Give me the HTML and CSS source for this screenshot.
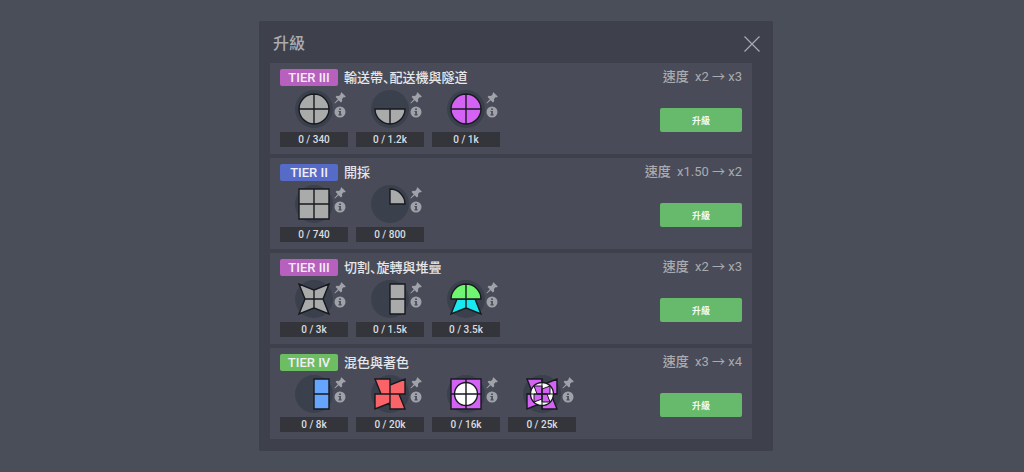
FILE: index.html
```
<!DOCTYPE html>
<html lang="zh-Hant">
  <head>
    <meta charset="UTF-8" />
    <meta name="viewport" content="width=device-width, initial-scale=1.0" />
    <title>升級</title>
    <link rel="stylesheet" href="styles.css" />
  </head>
  <body>
    <!-- Shared icons -->
    <svg class="sprite" aria-hidden="true">
      <symbol id="pin" viewBox="0 0 12 12">
        <path d="M7.4 0.2 L11.8 4.6 L10.7 5.4 L9.9 5.1 L8 7 L8.2 9.3 L6.9 10.4 L4.7 8.2 L0.9 11.6 L0.4 11.1 L3.8 7.3 L1.6 5.1 L2.7 3.8 L5 4 L6.9 2.1 L6.6 1.3 Z" />
      </symbol>
      <symbol id="info" viewBox="0 0 12 12">
        <circle cx="6" cy="6" r="5.5" />
        <path class="hole" d="M5.1 2.4h1.8v1.6H5.1zM4.5 4.9h2.4v3.4h.7v1.2H4.5V8.3h.7V6.1h-.7z" />
      </symbol>
      <symbol id="circle" viewBox="0 0 38 38">
        <path d="M19 19V4A15 15 0 0 1 34 19ZM19 19H34A15 15 0 0 1 19 34ZM19 19V34A15 15 0 0 1 4 19ZM19 19H4A15 15 0 0 1 19 4Z" />
      </symbol>
      <symbol id="square" viewBox="0 0 38 38">
        <path d="M4 4H19V19H4ZM19 4H34V19H19ZM19 19H34V34H19ZM4 19H19V34H4Z" />
      </symbol>
      <symbol id="half-square" viewBox="0 0 38 38">
        <path d="M19 4H34V19H19ZM19 19H34V34H19Z" />
      </symbol>
      <symbol id="windmill" viewBox="0 0 38 38">
        <path d="M19 19V4H4L10 19ZM19 19H34V4L19 10ZM19 19V34H34L28 19ZM19 19H4V34L19 28Z" />
      </symbol>
    </svg>

    <main class="panel">
      <header class="panel-header">
        <h1>升級</h1>
        <button type="button" class="close" aria-label="關閉">
          <svg viewBox="0 0 16 16"><path d="M0.5 0.5 L15.5 15.5 M15.5 0.5 L0.5 15.5" /></svg>
        </button>
      </header>

      <section class="card">
        <div class="info">
          <div class="card-title">
            <span class="tier tier-3">TIER III</span>
            <h2>輸送帶、配送機與隧道</h2>
          </div>
          <ul class="costs">
            <li>
              <div class="cost">
                <svg class="shape gray"><use href="#circle" /></svg>
                <div class="tools">
                  <svg><use href="#pin" /></svg>
                  <svg><use href="#info" /></svg>
                </div>
              </div>
              <span class="amount">0 / 340</span>
            </li>
            <li>
              <div class="cost">
                <svg class="shape gray" viewBox="0 0 38 38"><path d="M19 19H34A15 15 0 0 1 19 34ZM19 19V34A15 15 0 0 1 4 19Z" /></svg>
                <div class="tools">
                  <svg><use href="#pin" /></svg>
                  <svg><use href="#info" /></svg>
                </div>
              </div>
              <span class="amount">0 / 1.2k</span>
            </li>
            <li>
              <div class="cost">
                <svg class="shape purple"><use href="#circle" /></svg>
                <div class="tools">
                  <svg><use href="#pin" /></svg>
                  <svg><use href="#info" /></svg>
                </div>
              </div>
              <span class="amount">0 / 1k</span>
            </li>
          </ul>
        </div>
        <div class="action">
          <p class="speed"><span>速度</span> x2 → x3</p>
          <button type="button" class="upgrade">升級</button>
        </div>
      </section>

      <section class="card">
        <div class="info">
          <div class="card-title">
            <span class="tier tier-2">TIER II</span>
            <h2>開採</h2>
          </div>
          <ul class="costs">
            <li>
              <div class="cost">
                <svg class="shape gray"><use href="#square" /></svg>
                <div class="tools">
                  <svg><use href="#pin" /></svg>
                  <svg><use href="#info" /></svg>
                </div>
              </div>
              <span class="amount">0 / 740</span>
            </li>
            <li>
              <div class="cost">
                <svg class="shape gray" viewBox="0 0 38 38"><path d="M19 19V4A15 15 0 0 1 34 19Z" /></svg>
                <div class="tools">
                  <svg><use href="#pin" /></svg>
                  <svg><use href="#info" /></svg>
                </div>
              </div>
              <span class="amount">0 / 800</span>
            </li>
          </ul>
        </div>
        <div class="action">
          <p class="speed"><span>速度</span> x1.50 → x2</p>
          <button type="button" class="upgrade">升級</button>
        </div>
      </section>

      <section class="card">
        <div class="info">
          <div class="card-title">
            <span class="tier tier-3">TIER III</span>
            <h2>切割、旋轉與堆疊</h2>
          </div>
          <ul class="costs">
            <li>
              <div class="cost">
                <svg class="shape gray" viewBox="0 0 38 38"><path d="M19 19V10L4 4L10 19ZM19 19H28L34 4L19 10ZM19 19V28L34 34L28 19ZM19 19H10L4 34L19 28Z" /></svg>
                <div class="tools">
                  <svg><use href="#pin" /></svg>
                  <svg><use href="#info" /></svg>
                </div>
              </div>
              <span class="amount">0 / 3k</span>
            </li>
            <li>
              <div class="cost">
                <svg class="shape gray"><use href="#half-square" /></svg>
                <div class="tools">
                  <svg><use href="#pin" /></svg>
                  <svg><use href="#info" /></svg>
                </div>
              </div>
              <span class="amount">0 / 1.5k</span>
            </li>
            <li>
              <div class="cost">
                <svg class="shape" viewBox="0 0 38 38">
                  <path class="cyan" d="M19 19V28L34 34L28 19ZM19 19H10L4 34L19 28Z" />
                  <path class="green" d="M19 19V4A15 15 0 0 1 34 19ZM19 19H4A15 15 0 0 1 19 4Z" />
                </svg>
                <div class="tools">
                  <svg><use href="#pin" /></svg>
                  <svg><use href="#info" /></svg>
                </div>
              </div>
              <span class="amount">0 / 3.5k</span>
            </li>
          </ul>
        </div>
        <div class="action">
          <p class="speed"><span>速度</span> x2 → x3</p>
          <button type="button" class="upgrade">升級</button>
        </div>
      </section>

      <section class="card">
        <div class="info">
          <div class="card-title">
            <span class="tier tier-4">TIER IV</span>
            <h2>混色與著色</h2>
          </div>
          <ul class="costs">
            <li>
              <div class="cost">
                <svg class="shape blue"><use href="#half-square" /></svg>
                <div class="tools">
                  <svg><use href="#pin" /></svg>
                  <svg><use href="#info" /></svg>
                </div>
              </div>
              <span class="amount">0 / 8k</span>
            </li>
            <li>
              <div class="cost">
                <svg class="shape red"><use href="#windmill" /></svg>
                <div class="tools">
                  <svg><use href="#pin" /></svg>
                  <svg><use href="#info" /></svg>
                </div>
              </div>
              <span class="amount">0 / 20k</span>
            </li>
            <li>
              <div class="cost">
                <svg class="shape" viewBox="0 0 38 38">
                  <path class="purple" d="M4 4H34V34H4Z" />
                  <circle class="white" cx="19" cy="19" r="11.5" />
                  <path d="M19 4V34M4 19H34" />
                </svg>
                <div class="tools">
                  <svg><use href="#pin" /></svg>
                  <svg><use href="#info" /></svg>
                </div>
              </div>
              <span class="amount">0 / 16k</span>
            </li>
            <li>
              <div class="cost">
                <svg class="shape" viewBox="0 0 38 38">
                  <path class="purple" d="M19 19V4H4L10 19ZM19 19H34V4L19 10ZM19 19V34H34L28 19ZM19 19H4V34L19 28Z" />
                  <circle class="white" cx="19" cy="19" r="11.5" />
                  <path class="purple thin" d="M19 19V11H11L14 19ZM19 19H27V11L19 14ZM19 19V27H27L24 19ZM19 19H11V27L19 24Z" />
                  <path class="thin" d="M19 4V34M4 19H34" />
                </svg>
                <div class="tools">
                  <svg><use href="#pin" /></svg>
                  <svg><use href="#info" /></svg>
                </div>
              </div>
              <span class="amount">0 / 25k</span>
            </li>
          </ul>
        </div>
        <div class="action">
          <p class="speed"><span>速度</span> x3 → x4</p>
          <button type="button" class="upgrade">升級</button>
        </div>
      </section>
    </main>
  </body>
</html>
```
FILE: styles.css
```
* {
  box-sizing: border-box;
}

body {
  margin: 0;
  padding: 21px 0 21px 8px;
  background-color: #4a4e58;
  color: #a9abb0;
  font-family: Roboto, "Noto Sans CJK JP", sans-serif;
}

h1,
h2,
p,
ul {
  margin: 0;
  padding: 0;
}

button {
  border: none;
  padding: 0;
  font-family: inherit;
  cursor: pointer;
}

.sprite {
  display: none;
}

.panel {
  max-width: 514px;
  margin: 0 auto;
  padding: 0 21px 12px 11px;
  background-color: #3e404b;
  display: flex;
  flex-direction: column;
  gap: 4px;
}

.panel-header {
  height: 38px;
  padding-top: 8px;
  padding-left: 3px;
  margin-right: -8px;
  display: flex;
  align-items: center;
  justify-content: space-between;
}

h1 {
  font-size: 16px;
  line-height: 24px;
  font-weight: 500;
}

.close {
  width: 16px;
  height: 16px;
  background: none;
}

.close svg {
  display: block;
  width: 16px;
  height: 16px;
  stroke: #a9abb0;
  stroke-width: 1.2;
}

/* Upgrade cards */
.card {
  padding: 6px 10px 7px;
  background-color: #494c58;
  display: flex;
  justify-content: space-between;
}

.info {
  display: flex;
  flex-direction: column;
  gap: 4px;
}

.card-title {
  display: flex;
  align-items: center;
  gap: 6px;
  height: 17px;
}

.tier {
  width: 58px;
  border-radius: 2px;
  color: #f1eef5;
  font-size: 13px;
  line-height: 17px;
  font-weight: 500;
  text-align: center;
}

.tier-2 {
  background-color: #566bc8;
}

.tier-3 {
  background-color: #b860bd;
}

.tier-4 {
  background-color: #6dbd63;
}

/* half-width comma, set at the lower left */
h2 {
  color: #e6e7ea;
  font-family: Roboto, "Noto Sans CJK JP", sans-serif;
  font-size: 13px;
  line-height: 17px;
  font-weight: 500;
  font-feature-settings: "halt", "locl" 0;
}

.costs {
  display: flex;
  gap: 8px;
  list-style: none;
}

.costs li {
  width: 68px;
  display: flex;
  flex-direction: column;
  gap: 4px;
}

.cost {
  display: flex;
  gap: 1px;
  padding-left: 15px;
}

.shape {
  width: 38px;
  height: 38px;
  border-radius: 50%;
  background-color: #3a404c;
  stroke: #17191f;
  stroke-width: 1.4;
  overflow: visible;
}

.thin {
  stroke-width: 1;
}

.tools {
  display: flex;
  flex-direction: column;
  gap: 2px;
  padding-top: 2px;
}

.tools svg {
  width: 12px;
  height: 12px;
  fill: #a0a2aa;
}

.hole {
  fill: #494c58;
}

.gray {
  fill: #a9abaa;
}

.purple {
  fill: #d462f5;
}

.green {
  fill: #70f570;
}

.cyan {
  fill: #18e8f0;
}

.blue {
  fill: #65a5fb;
}

.red {
  fill: #fa6468;
}

.white {
  fill: #ffffff;
}

.amount {
  background-color: #33353b;
  color: #dcdde0;
  font-size: 10px;
  line-height: 15px;
  font-weight: 500;
  text-align: center;
}

.action {
  display: flex;
  flex-direction: column;
  align-items: flex-end;
  gap: 24px;
}

.speed {
  font-size: 13px;
  line-height: 15px;
}

.speed span {
  margin-right: 3px;
  font-weight: 500;
}

.upgrade {
  width: 82px;
  height: 24px;
  border-radius: 2px;
  background-color: #67ba6c;
  color: #f4fbf4;
  font-size: 9px;
  font-weight: 700;
}
```
